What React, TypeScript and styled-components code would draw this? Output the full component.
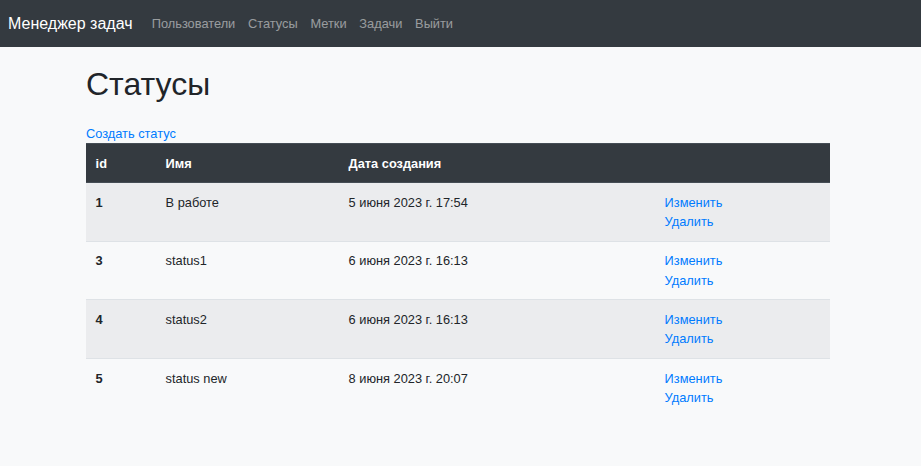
import styled, { createGlobalStyle } from "styled-components";

type Status = {
    id: number,
    name: string,
    createdAt: string
}

const statuses: Status[] = [
    { id: 1, name: "В работе", createdAt: "5 июня 2023 г. 17:54" },
    { id: 3, name: "status1", createdAt: "6 июня 2023 г. 16:13" },
    { id: 4, name: "status2", createdAt: "6 июня 2023 г. 16:13" },
    { id: 5, name: "status new", createdAt: "8 июня 2023 г. 20:07" },
];

const navLinks = ["Пользователи", "Статусы", "Метки", "Задачи", "Выйти"];

export default function App() {
    return (
        <>
            <GlobalStyle />
            <Navbar>
                <Brand href="#">Менеджер задач</Brand>
                <NavList>
                    {navLinks.map(l => <NavLink key={l} href="#">{l}</NavLink>)}
                </NavList>
            </Navbar>
            <Container>
                <Heading>Статусы</Heading>
                <Link href="#">Создать статус</Link>
                <Table>
                    <colgroup>
                        <col style={{ width: 70 }} />
                        <col style={{ width: 183 }} />
                        <col style={{ width: 316 }} />
                        <col />
                    </colgroup>
                    <thead>
                        <tr>
                            <Th>id</Th>
                            <Th>Имя</Th>
                            <Th>Дата создания</Th>
                            <Th></Th>
                        </tr>
                    </thead>
                    <tbody>
                        {statuses.map((s, idx) => (
                            <Row key={s.id} $striped={idx % 2 === 0}>
                                <Td><b>{s.id}</b></Td>
                                <Td>{s.name}</Td>
                                <Td>{s.createdAt}</Td>
                                <Td>
                                    <ActionLink href="#">Изменить</ActionLink>
                                    <ActionLink href="#">Удалить</ActionLink>
                                </Td>
                            </Row>
                        ))}
                    </tbody>
                </Table>
            </Container>
        </>
    );
}

const GlobalStyle = createGlobalStyle`
    body {
        margin: 0;
        background: #f8f9fa;
        color: #212529;
        font-family: "Liberation Sans", Arial, sans-serif;
        font-size: 12.8px;
        line-height: 19.2px;
    }
`;

const Navbar = styled.nav`
    display: flex;
    align-items: center;
    height: 47px;
    padding: 0 8px;
    background: #343a40;
`;

const Brand = styled.a`
    color: #fff;
    font-size: 16px;
    line-height: 24px;
    text-decoration: none;
    margin-right: 12.8px;
`;

const NavList = styled.div`
    display: flex;
`;

const NavLink = styled.a`
    color: rgba(255, 255, 255, 0.5);
    padding: 0 6.4px;
    text-decoration: none;
`;

const Container = styled.main`
    width: 744px;
    margin-left: 86px;
    padding-top: 18.3px;
`;

const Heading = styled.h1`
    margin: 0 0 20px;
    font-size: 32px;
    line-height: 38.4px;
    font-weight: 400;
`;

const Link = styled.a`
    display: block;
    color: #007bff;
    text-decoration: none;
`;

const Table = styled.table`
    width: 100%;
    border-collapse: collapse;
    table-layout: fixed;
`;

const Th = styled.th`
    background: #343a40;
    color: #fff;
    text-align: left;
    font-weight: 700;
    padding: 9.6px;
    border-top: 0.8px solid #454d55;
    border-bottom: 1.6px solid #454d55;
`;

const Row = styled.tr<{ $striped: boolean }>`
    background: ${props => props.$striped ? "#ebecee" : "transparent"};
`;

const Td = styled.td`
    vertical-align: top;
    padding: 9.6px;
    border-top: 0.8px solid #dee2e6;

    tr:first-child > & {
        border-top: none;
    }
`;

const ActionLink = styled.a`
    display: block;
    color: #007bff;
    text-decoration: none;
`;
